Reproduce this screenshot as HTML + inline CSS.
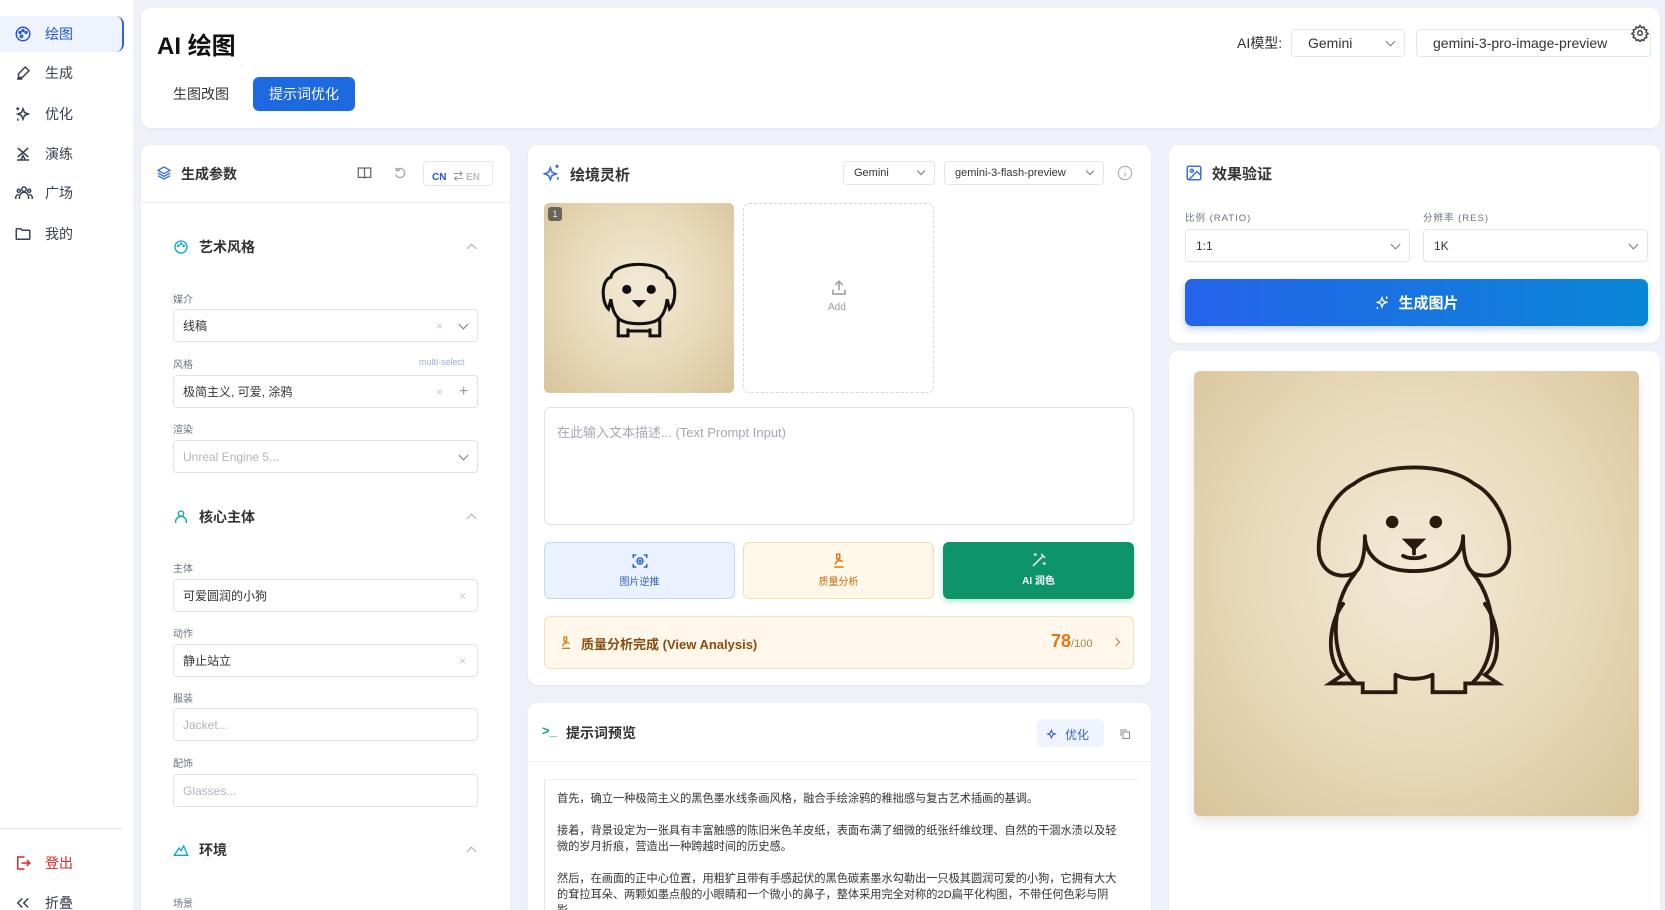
<!DOCTYPE html>
<html><head><meta charset="utf-8"><style>
*{box-sizing:border-box;margin:0;padding:0}
html{width:1665px;height:910px;overflow:hidden}
body{width:1665px;height:910px;overflow:hidden;background:#eef2f8;font-family:"Liberation Sans","Noto Sans CJK SC",sans-serif;color:#1f2937;position:relative}
.abs{position:absolute}
.side{left:0;top:0;width:133px;height:910px;background:#fff}
.nav{position:absolute;left:0;width:124px;height:36px;display:flex;align-items:center;font-size:14px;color:#374151}
.nav svg{position:absolute;left:14px}
.nav span{position:absolute;left:45px}
.card{position:absolute;background:#fff;border-radius:10px;box-shadow:0 1px 3px rgba(0,0,0,.05);overflow:hidden}
.lbl{position:absolute;left:32px;font-size:10px;color:#6b7280}
.inp{position:absolute;left:32px;width:305px;height:33px;border:1px solid #dfe3e8;border-radius:4px;font-size:12px;display:flex;align-items:center;padding-left:9px;color:#333}
.ph{color:#b0b5bd}
.sec{position:absolute;left:32px;font-size:14px;font-weight:bold;color:#333;display:flex;align-items:center;gap:10px}
.chev{position:absolute;right:10px;top:11px;width:7px;height:7px;border-right:1.3px solid #777;border-bottom:1.3px solid #777;transform:rotate(45deg)}
.up{position:absolute;left:327px;width:7px;height:7px;border-left:1.3px solid #aaa;border-top:1.3px solid #aaa;transform:rotate(45deg)}
.x{position:absolute;color:#c5c9cf;font-size:12px}
.sel{position:absolute;border:1px solid #e3e6ea;border-radius:4px;background:#fff;font-size:12px;display:flex;align-items:center;padding-left:10px;color:#333}
.paper{background:radial-gradient(ellipse at 50% 45%,#f3ead7 0%,#e7d8b8 55%,#d8c49a 100%)}
</style></head><body>

<div class="abs side">
  <div class="nav" style="top:16px;background:#eef3fd;border-right:2px solid #2563eb;border-radius:0 8px 8px 0;color:#2456d6">
    <svg width="18" height="18" viewBox="0 0 24 24" fill="none" stroke="#2456d6" stroke-width="2"><circle cx="12" cy="12" r="9"/><circle cx="8" cy="10" r="1.2" fill="#2456d6"/><circle cx="12" cy="7.5" r="1.2" fill="#2456d6"/><circle cx="16" cy="10" r="1.2" fill="#2456d6"/><circle cx="10" cy="15" r="1.5"/></svg><span>绘图</span></div>
  <div class="nav" style="top:55px"><svg width="18" height="18" viewBox="0 0 24 24" fill="none" stroke="#374151" stroke-width="2"><path d="M4 20h7M15 4l5 5-9 9H6v-5z"/></svg><span>生成</span></div>
  <div class="nav" style="top:96px"><svg width="18" height="18" viewBox="0 0 24 24" fill="none" stroke="#374151" stroke-width="2"><path d="M12 5l2 5 5 2-5 2-2 5-2-5-5-2 5-2z"/><path d="M5 3v4M3 5h4M5 18v3"/></svg><span>优化</span></div>
  <div class="nav" style="top:136px"><svg width="18" height="18" viewBox="0 0 24 24" fill="none" stroke="#374151" stroke-width="2"><path d="M5 4l14 12M19 4L5 16M4 20h16M9 20l3-6 3 6"/></svg><span>演练</span></div>
  <div class="nav" style="top:175px"><svg width="20" height="18" viewBox="0 0 24 24" fill="none" stroke="#374151" stroke-width="2"><circle cx="12" cy="7" r="3"/><circle cx="5" cy="9" r="2"/><circle cx="19" cy="9" r="2"/><path d="M6 20v-3a6 6 0 0112 0v3M1 20v-2a4 4 0 014-4M23 20v-2a4 4 0 00-4-4"/></svg><span>广场</span></div>
  <div class="nav" style="top:216px"><svg width="18" height="18" viewBox="0 0 24 24" fill="none" stroke="#374151" stroke-width="2"><path d="M3 6a1 1 0 011-1h5l2 2h9a1 1 0 011 1v10a1 1 0 01-1 1H4a1 1 0 01-1-1z"/></svg><span>我的</span></div>
  <div class="abs" style="left:0;top:828px;width:124px;border-top:1px solid #e5e7eb"></div>
  <div class="nav" style="top:845px;color:#dc2626"><svg width="18" height="18" viewBox="0 0 24 24" fill="none" stroke="#dc2626" stroke-width="2"><path d="M14 4H5v16h9M10 12h11M17 8l4 4-4 4"/></svg><span>登出</span></div>
  <div class="nav" style="top:885px"><svg width="18" height="18" viewBox="0 0 24 24" fill="none" stroke="#374151" stroke-width="2"><path d="M11 6l-6 6 6 6M19 6l-6 6 6 6"/></svg><span>折叠</span></div>
</div>

<!-- header -->
<div class="card" style="left:141px;top:8px;width:1519px;height:120px;border-radius:10px">
  <div class="abs" style="left:16px;top:18px;font-size:24px;font-weight:bold;color:#111">AI 绘图</div>
  <div class="abs" style="left:32px;top:76px;font-size:14px;color:#333">生图改图</div>
  <div class="abs" style="left:112px;top:69px;width:102px;height:34px;background:#1d6ae0;border-radius:6px;color:#fff;font-size:14px;display:flex;align-items:center;justify-content:center">提示词优化</div>
  <div class="abs" style="left:1096px;top:25px;font-size:14px;color:#333">AI模型:</div>
  <div class="sel" style="left:1150px;top:21px;width:114px;height:28px;font-size:14px;padding-left:16px">Gemini<div class="chev" style="top:8px"></div></div>
  <div class="sel" style="left:1275px;top:21px;width:235px;height:28px;font-size:14px;padding-left:16px">gemini-3-pro-image-preview</div>
  <svg class="abs" style="left:1490px;top:16px" width="18" height="18" viewBox="0 0 24 24" fill="none" stroke="#444" stroke-width="2"><circle cx="12" cy="12" r="3"/><path d="M12 2l2 3 3-1 1 3 3 1-1 3 3 2-3 2 1 3-3 1-1 3-3-1-2 3-2-3-3 1-1-3-3-1 1-3-3-2 3-2-1-3 3-1 1-3 3 1z"/></svg>
</div>

<!-- left panel -->
<div class="card" style="left:141px;top:145px;width:369px;height:775px">
  <svg class="abs" style="left:15px;top:20px" width="16" height="16" viewBox="0 0 24 24" fill="none" stroke="#3b6fe0" stroke-width="2"><path d="M12 3l9 5-9 5-9-5z M3 12l9 5 9-5 M3 16l9 5 9-5"/></svg>
  <div class="abs" style="left:40px;top:19px;font-size:14px;font-weight:bold;color:#333">生成参数</div>
  <svg class="abs" style="left:216px;top:21px" width="15" height="14" viewBox="0 0 24 22" fill="none" stroke="#666" stroke-width="2"><path d="M2 3h8a2 2 0 012 2v15a2 2 0 00-2-2H2zM22 3h-8a2 2 0 00-2 2v15a2 2 0 012-2h8z"/></svg>
  <svg class="abs" style="left:252px;top:21px" width="14" height="14" viewBox="0 0 24 24" fill="none" stroke="#999" stroke-width="2"><path d="M4 12a8 8 0 108-8H8M8 1v6h6" transform="rotate(-20 12 12)"/></svg>
  <div class="abs" style="left:282px;top:16px;width:70px;height:25px;border:1px solid #e5e7eb;border-radius:4px;font-size:10px;font-weight:bold;color:#2456d6;padding:6px 0 0 8px">CN <span style="color:#999;margin-left:4px">⇄</span> <span style="color:#bbb">EN</span></div>
  <div class="abs" style="left:0;top:57px;width:369px;border-top:1px solid #eceef1"></div>

  <div class="sec" style="top:92px"><svg width="16" height="16" viewBox="0 0 24 24" fill="none" stroke="#0ea5c6" stroke-width="2"><circle cx="12" cy="12" r="9"/><circle cx="8" cy="10" r="1"/><circle cx="12" cy="7" r="1"/><circle cx="16" cy="10" r="1"/></svg>艺术风格</div>
  <div class="up" style="top:100px"></div>
  <div class="lbl" style="top:146px">媒介</div>
  <div class="inp" style="top:164px">线稿<span class="x" style="left:262px">×</span><div class="chev"></div></div>
  <div class="lbl" style="top:211px">风格</div><div class="abs" style="left:278px;top:212px;font-size:9px;color:#9bb0d8">multi-select</div>
  <div class="inp" style="top:230px">极简主义, 可爱, 涂鸦<span class="x" style="left:262px">×</span><span class="abs" style="left:285px;color:#999;font-size:16px">+</span></div>
  <div class="lbl" style="top:276px">渲染</div>
  <div class="inp" style="top:295px"><span class="ph">Unreal Engine 5...</span><div class="chev"></div></div>

  <div class="sec" style="top:362px"><svg width="16" height="16" viewBox="0 0 24 24" fill="none" stroke="#0ea5a6" stroke-width="2"><circle cx="12" cy="7" r="4"/><path d="M4 21v-2a6 6 0 0116 0v2"/></svg>核心主体</div>
  <div class="up" style="top:370px"></div>
  <div class="lbl" style="top:415px">主体</div>
  <div class="inp" style="top:434px">可爱圆润的小狗<span class="x" style="left:285px">×</span></div>
  <div class="lbl" style="top:480px">动作</div>
  <div class="inp" style="top:499px">静止站立<span class="x" style="left:285px">×</span></div>
  <div class="lbl" style="top:545px">服装</div>
  <div class="inp" style="top:563px"><span class="ph">Jacket...</span></div>
  <div class="lbl" style="top:610px">配饰</div>
  <div class="inp" style="top:629px"><span class="ph">Glasses...</span></div>

  <div class="sec" style="top:695px"><svg width="16" height="16" viewBox="0 0 24 24" fill="none" stroke="#0ea5c6" stroke-width="2"><path d="M2 20h20L16 6l-4 7-3-4z"/></svg>环境</div>
  <div class="up" style="top:703px"></div>
  <div class="lbl" style="top:750px">场景</div>
</div>

<!-- middle panel -->
<div class="card" style="left:528px;top:145px;width:623px;height:540px">
  <svg class="abs" style="left:14px;top:18px" width="20" height="20" viewBox="0 0 24 24" fill="none" stroke="#3b6fe0" stroke-width="2"><path d="M10 6l2 5 5 2-5 2-2 5-2-5-5-2 5-2z"/><path d="M18 2v4M16 4h4M19 17v3"/></svg>
  <div class="abs" style="left:42px;top:19px;font-size:15px;font-weight:bold;color:#333">绘境灵析</div>
  <div class="sel" style="left:315px;top:16px;width:92px;height:24px;font-size:11px">Gemini<div class="chev" style="top:6px;width:6px;height:6px"></div></div>
  <div class="sel" style="left:416px;top:16px;width:160px;height:24px;font-size:11px">gemini-3-flash-preview<div class="chev" style="top:6px;width:6px;height:6px"></div></div>
  <svg class="abs" style="left:589px;top:20px" width="16" height="16" viewBox="0 0 24 24" fill="none" stroke="#aaa" stroke-width="1.6"><circle cx="12" cy="12" r="10"/><path d="M12 11v6M12 7v1"/></svg>

  <div class="abs paper" style="left:16px;top:58px;width:190px;height:190px;border-radius:5px;overflow:hidden">
    <div class="abs" style="left:4px;top:4px;width:14px;height:14px;background:#6b6458;border-radius:3px;color:#eee;font-size:9px;text-align:center;line-height:14px">1</div>
    <svg class="abs" style="left:40px;top:40px" width="110" height="110" viewBox="0 0 90 90" fill="none" stroke="#111" stroke-width="2.5"><path d="M22 28c2-14 44-14 46 0 8 2 8 20 2 26l-2-8c-2 16-8 20-23 20-15 0-21-4-23-20l-2 8c-6-6-6-24 2-26z"/><path d="M28 62v14h8v-6M62 62v14h-8v-6M36 72h18"/><circle cx="35" cy="38" r="2.5" fill="#111"/><circle cx="55" cy="38" r="2.5" fill="#111"/><path d="M42 48h6l-3 3z" fill="#111"/></svg>
  </div>
  <div class="abs" style="left:215px;top:58px;width:191px;height:190px;border:1.5px dashed #d4d8de;border-radius:6px">
    <svg class="abs" style="left:86px;top:75px" width="18" height="18" viewBox="0 0 24 24" fill="none" stroke="#999" stroke-width="2"><path d="M12 15V3M7 8l5-5 5 5M4 14v6h16v-6"/></svg>
    <div class="abs" style="left:84px;top:98px;font-size:10px;color:#999">Add</div>
  </div>
  <div class="abs" style="left:16px;top:262px;width:590px;height:118px;border:1px solid #dfe3e8;border-radius:6px;padding:14px 12px;font-size:13px;color:#a3a8b0">在此输入文本描述... (Text Prompt Input)</div>

  <div class="abs" style="left:16px;top:397px;width:191px;height:57px;background:#eaf2ff;border:1px solid #c9d8f2;border-radius:6px;text-align:center;color:#2f5fd0;font-size:10px">
    <svg style="margin-top:9px" width="18" height="18" viewBox="0 0 24 24" fill="none" stroke="#2f5fd0" stroke-width="2"><path d="M3 8V4h4M17 4h4v4M21 16v4h-4M7 20H3v-4"/><circle cx="12" cy="12" r="4"/><circle cx="12" cy="12" r="1" fill="#2f5fd0"/></svg><div>图片逆推</div></div>
  <div class="abs" style="left:215px;top:397px;width:191px;height:57px;background:#fff8e8;border:1px solid #f2e0b5;border-radius:6px;text-align:center;color:#c46a10;font-size:10px">
    <svg style="margin-top:9px" width="18" height="18" viewBox="0 0 24 24" fill="none" stroke="#d97a14" stroke-width="2"><path d="M6 20h12M9 3h4v6H9zM11 9v3M7 17a6 6 0 0110-4"/></svg><div>质量分析</div></div>
  <div class="abs" style="left:415px;top:397px;width:191px;height:57px;background:#0d9468;border-radius:6px;text-align:center;color:#fff;font-size:10px;font-weight:bold;box-shadow:0 3px 6px rgba(16,185,129,.3)">
    <svg style="margin-top:9px" width="18" height="18" viewBox="0 0 24 24" fill="none" stroke="#fff" stroke-width="2"><path d="M4 20L18 6M15 4l5 5M7 3v3M5 5h4M19 15v3M17 17h4"/></svg><div>AI 润色</div></div>

  <div class="abs" style="left:16px;top:471px;width:590px;height:53px;background:#fff8ea;border:1px solid #f3e1b8;border-radius:6px">
    <svg class="abs" style="left:13px;top:17px" width="16" height="18" viewBox="0 0 24 24" fill="none" stroke="#d97a14" stroke-width="2"><path d="M6 20h12M9 3h4v6H9zM11 9v3M7 17a6 6 0 0110-4"/></svg>
    <div class="abs" style="left:36px;top:17px;font-size:13px;font-weight:bold;color:#8a4b10">质量分析完成 (View Analysis)</div>
    <div class="abs" style="left:506px;top:14px;font-size:18px;font-weight:bold;color:#d97a14">78<span style="font-size:11px;font-weight:normal;color:#b08050">/100</span></div>
    <div class="abs" style="left:568px;top:22px;width:6px;height:6px;border-right:1.5px solid #b08050;border-top:1.5px solid #b08050;transform:rotate(45deg)"></div>
  </div>
</div>

<!-- prompt preview -->
<div class="card" style="left:528px;top:703px;width:623px;height:217px">
  <div class="abs" style="left:14px;top:20px;font-size:13px;color:#10a37f;font-weight:bold">&gt;_</div>
  <div class="abs" style="left:38px;top:20px;font-size:14px;font-weight:bold;color:#333">提示词预览</div>
  <div class="abs" style="left:509px;top:16px;width:67px;height:28px;background:#eef3fd;border-radius:5px;color:#3b5fc4;font-size:12px;padding:7px 0 0 28px">优化</div>
  <svg class="abs" style="left:518px;top:24px" width="13" height="13" viewBox="0 0 24 24" fill="none" stroke="#3b5fc4" stroke-width="2"><path d="M10 6l2 5 5 2-5 2-2 5-2-5-5-2 5-2z"/></svg>
  <svg class="abs" style="left:591px;top:25px" width="12" height="12" viewBox="0 0 24 24" fill="none" stroke="#888" stroke-width="2"><rect x="8" y="8" width="13" height="13"/><path d="M4 16V4h12"/></svg>
  <div class="abs" style="left:0;top:58px;width:623px;border-top:1px solid #eceef1"></div>
  <div class="abs" style="left:16px;top:76px;width:595px;height:160px;border-left:1px solid #e5e7eb;border-top:1px solid #eee;padding:11px 12px;font-size:11.2px;line-height:16px;color:#333">
    首先，确立一种极简主义的黑色墨水线条画风格，融合手绘涂鸦的稚拙感与复古艺术插画的基调。<br><br>
    接着，背景设定为一张具有丰富触感的陈旧米色羊皮纸，表面布满了细微的纸张纤维纹理、自然的干涸水渍以及轻微的岁月折痕，营造出一种跨越时间的历史感。<br><br>
    然后，在画面的正中心位置，用粗犷且带有手感起伏的黑色碳素墨水勾勒出一只极其圆润可爱的小狗，它拥有大大的耷拉耳朵、两颗如墨点般的小眼睛和一个微小的鼻子，整体采用完全对称的2D扁平化构图，不带任何色彩与阴影。
  </div>
</div>

<!-- right panel -->
<div class="card" style="left:1169px;top:145px;width:491px;height:198px">
  <svg class="abs" style="left:16px;top:19px" width="18" height="18" viewBox="0 0 24 24" fill="none" stroke="#3b6fe0" stroke-width="2"><rect x="3" y="3" width="18" height="18" rx="2"/><circle cx="9" cy="9" r="2"/><path d="M21 15l-5-5L5 21"/></svg>
  <div class="abs" style="left:43px;top:18px;font-size:15px;font-weight:bold;color:#333">效果验证</div>
  <div class="abs" style="left:16px;top:65px;font-size:9.5px;color:#6b7280;letter-spacing:1px">比例 (RATIO)</div>
  <div class="abs" style="left:254px;top:65px;font-size:9.5px;color:#6b7280;letter-spacing:1px">分辨率 (RES)</div>
  <div class="sel" style="left:16px;top:84px;width:225px;height:33px">1:1<div class="chev"></div></div>
  <div class="sel" style="left:254px;top:84px;width:225px;height:33px">1K<div class="chev"></div></div>
  <div class="abs" style="left:16px;top:134px;width:463px;height:47px;border-radius:7px;background:linear-gradient(90deg,#2563eb,#0a86d6);color:#fff;font-size:15px;font-weight:bold;display:flex;align-items:center;justify-content:center;gap:8px;box-shadow:0 3px 8px rgba(37,99,235,.3)">
    <svg width="16" height="16" viewBox="0 0 24 24" fill="none" stroke="#fff" stroke-width="2"><path d="M12 4l2 5 5 2-5 2-2 5-2-5-5-2 5-2z"/><path d="M19 2v4M5 18v3"/></svg>生成图片</div>
</div>
<div class="card" style="left:1169px;top:351px;width:491px;height:569px">
  <div class="abs paper" style="left:25px;top:20px;width:445px;height:445px;border-radius:6px;box-shadow:0 6px 12px rgba(0,0,0,.1)">
    <svg class="abs" style="left:100px;top:80px" width="240" height="262" viewBox="0 0 220 240" fill="none" stroke="#2a1a10" stroke-width="3.5" stroke-linecap="round"><path d="M55 30c25-20 85-20 110 0 20 10 35 40 32 65-3 15-15 22-30 18-8-3-12-15-12-35M55 30c-20 10-35 40-32 65 3 15 15 22 30 18 8-3 12-15 12-35"/><path d="M65 80c2 20 20 30 45 30s43-10 45-30"/><path d="M56 112c-25 30-22 80 0 100M164 112c25 30 22 80 0 100"/><path d="M45 140c-15 20-15 55 0 65l-12 8h30v8h30v-15M175 140c15 20 15 55 0 65l12 8h-30v8h-30v-15M93 205c10 5 24 5 34 0"/><circle cx="90" cy="65" r="4" fill="#2a1a10"/><circle cx="130" cy="65" r="4" fill="#2a1a10"/><path d="M103 82h14l-7 7z" fill="#2a1a10"/><path d="M110 89v5M100 96c5 3 15 3 20 0"/></svg>
  </div>
</div>
</body></html>
